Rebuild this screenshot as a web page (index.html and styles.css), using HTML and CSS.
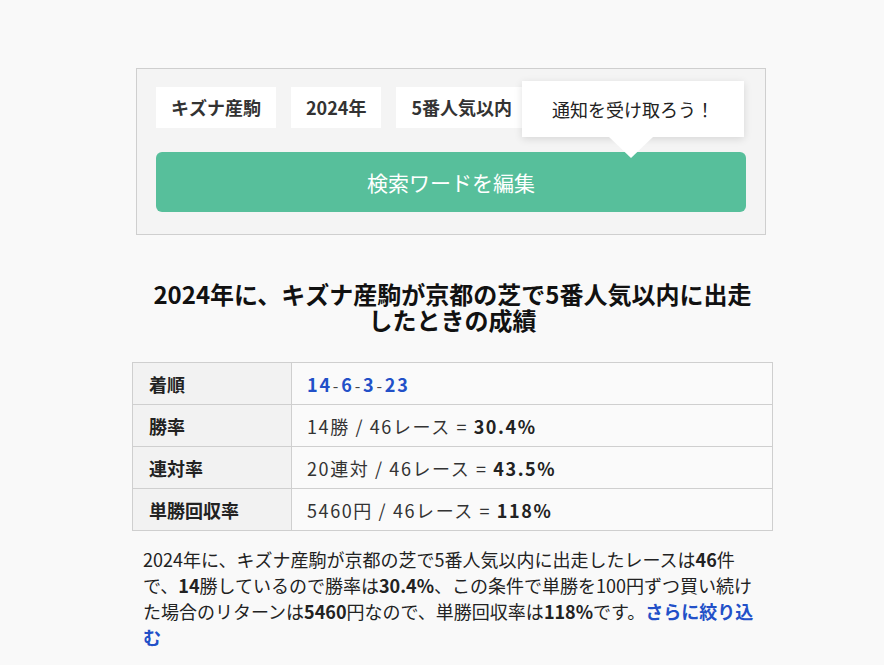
FILE: index.html
```html
<!DOCTYPE html>
<html lang="ja">
<head>
    <meta charset="UTF-8">
    <meta name="viewport" content="width=device-width, initial-scale=1.0">
    <title>キズナ産駒の成績</title>
    <link rel="stylesheet" href="styles.css">
</head>
<body>
    <div class="main">
        <div class="search-box">
            <ul class="tags">
                <li>キズナ産駒</li>
                <li>2024年</li>
                <li>5番人気以内</li>
                <li>京都</li>
            </ul>
            <div class="notice">通知を受け取ろう！</div>
            <button class="edit-btn">検索ワードを編集</button>
        </div>

        <h1 class="title">2024年に、キズナ産駒が京都の芝で5番人気以内に出走したときの成績</h1>

        <table class="result">
            <tr>
                <th>着順</th>
                <td class="rank"><b>14</b><span>-</span><b>6</b><span>-</span><b>3</b><span>-</span><b>23</b></td>
            </tr>
            <tr>
                <th>勝率</th>
                <td>14勝 / 46レース = <b>30.4%</b></td>
            </tr>
            <tr>
                <th>連対率</th>
                <td>20連対 / 46レース = <b>43.5%</b></td>
            </tr>
            <tr>
                <th>単勝回収率</th>
                <td>5460円 / 46レース = <b>118%</b></td>
            </tr>
        </table>

        <p class="summary">2024年に、キズナ産駒が京都の芝で5番人気以内に出走したレースは<b>46</b>件で、<b>14</b>勝しているので勝率は<b>30.4%</b>、この条件で単勝を100円ずつ買い続けた場合のリターンは<b>5460</b>円なので、単勝回収率は<b>118%</b>です。<a href="#" class="more">さらに絞り込む</a></p>
    </div>
</body>
</html>
```

FILE: styles.css
```css
* {
box-sizing: border-box;
}

body {
margin: 0;
background: #f9f9f9;
color: #222;
font-family: "Noto Sans CJK JP", "Noto Sans", sans-serif;
}

.main {
width: 641px;
margin-left: 132px;
padding-top: 68px;
}

.search-box {
position: relative;
margin: 0 7px 0 4px;
border: 1px solid #cfcfcf;
background: #f4f4f4;
padding: 18px 19px 22px 19px;
}

.tags {
margin: 0;
padding: 0;
list-style: none;
display: flex;
gap: 15px;
height: 41px;
overflow: hidden;
}

.tags li {
background: #fff;
padding: 0 15px;
height: 41px;
line-height: 41px;
font-size: 18px;
font-weight: bold;
color: #333;
white-space: nowrap;
}

.notice {
position: absolute;
left: 385px;
top: 12px;
width: 222px;
height: 56px;
background: #fff;
box-shadow: 0 2px 8px rgba(0, 0, 0, 0.12);
font-size: 18px;
line-height: 56px;
text-align: center;
color: #222;
}

.notice::after {
content: "";
position: absolute;
left: 87px;
bottom: -21px;
border-left: 22px solid transparent;
border-right: 22px solid transparent;
border-top: 21px solid #fff;
}

.edit-btn {
display: block;
width: 100%;
height: 60px;
margin-top: 24px;
appearance: none;
border: none;
border-radius: 6px;
background: #57bf9b;
color: #fff;
font-family: inherit;
font-size: 21px;
cursor: pointer;
}

.title {
margin: 46px 0 0 0;
padding: 0 20px;
font-size: 24px;
line-height: 26px;
font-weight: bold;
text-align: center;
color: #111;
}

.result {
width: 100%;
margin-top: 29px;
border-collapse: collapse;
font-size: 18px;
}

.result th,
.result td {
height: 42px;
border: 1px solid #cfcfcf;
text-align: left;
}

.result th {
width: 159px;
padding: 0 16px;
background: #f2f2f2;
font-weight: bold;
color: #222;
}

.result td {
padding: 0 15px;
background: #fafafa;
color: #333;
letter-spacing: 1.6px;
}

.result td b {
color: #222;
}

.result td.rank {
color: #444;
letter-spacing: 1.8px;
}

.result td.rank span {
padding: 0 1px;
font-size: 16px;
}

.result td.rank b {
color: #2250c8;
}

.summary {
margin: 15px 0 0 0;
padding: 0 12px 0 11px;
font-size: 18px;
line-height: 26px;
color: #222;
}

.summary b {
font-weight: bold;
}

.more {
color: #2250c8;
font-weight: bold;
text-decoration: none;
}
```
